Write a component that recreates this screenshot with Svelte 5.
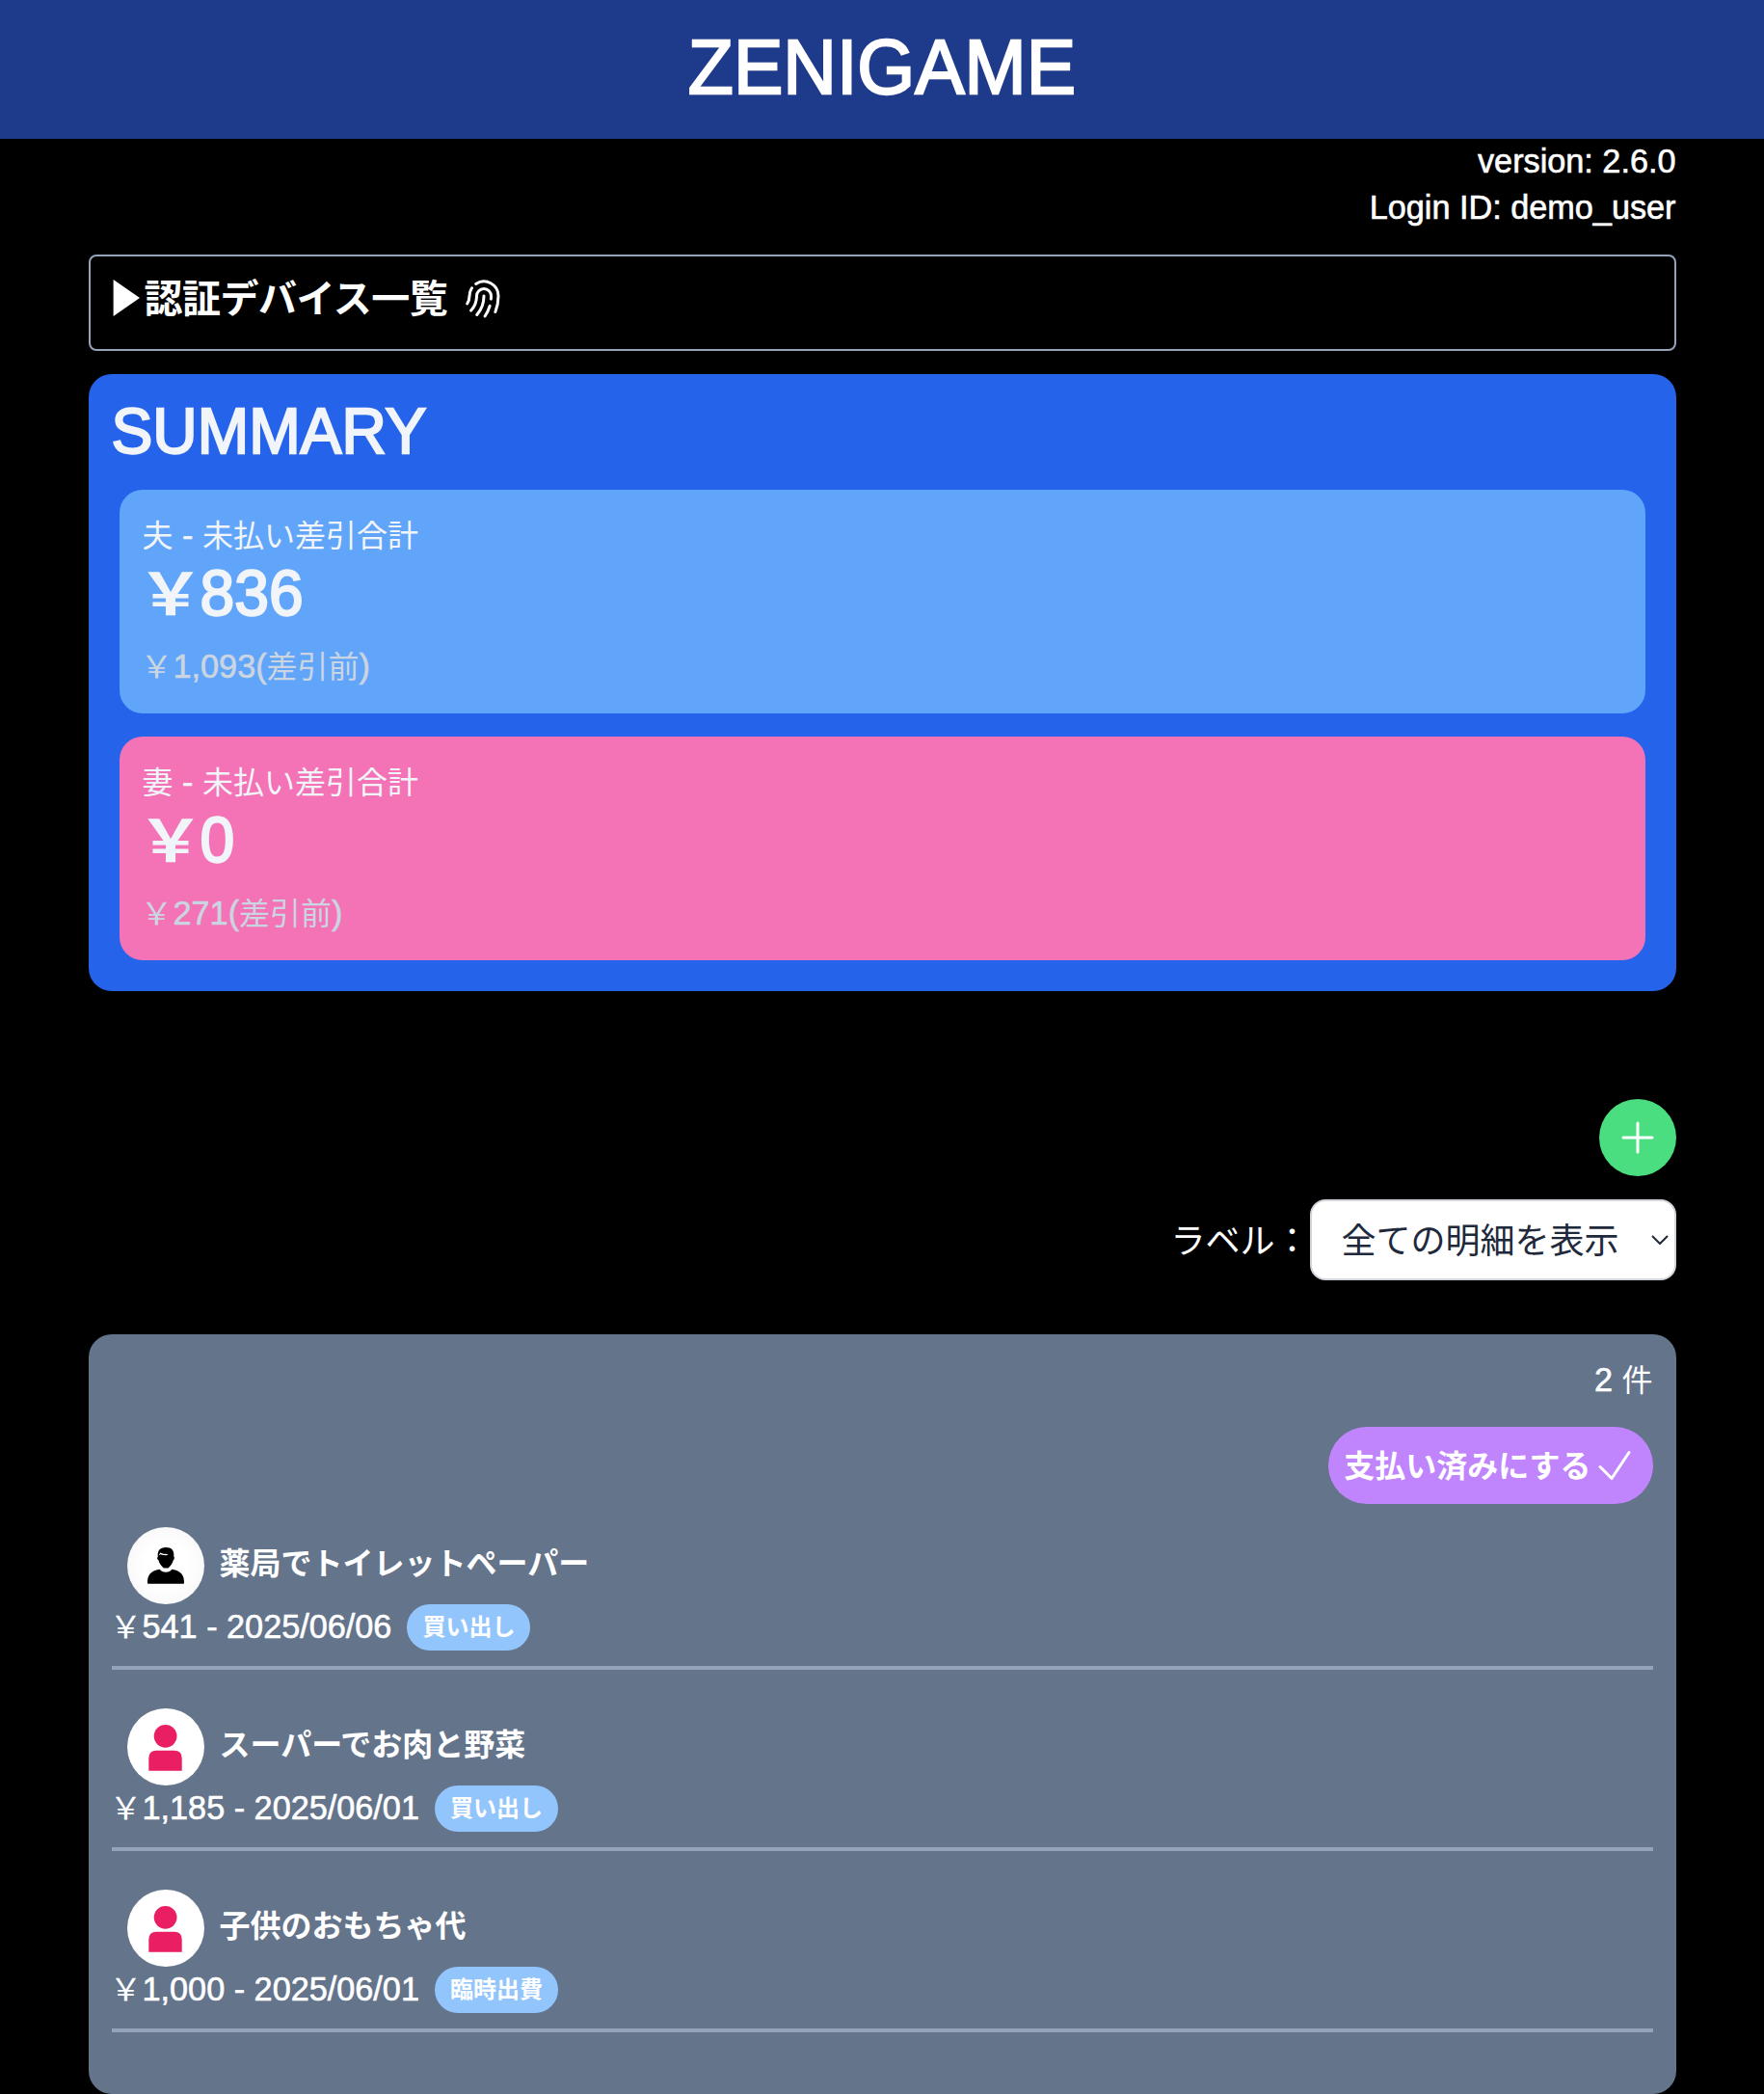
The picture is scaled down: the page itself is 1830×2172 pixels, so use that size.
<script>
  const summaries = [
    { who: '夫', kind: 'husband', amount: '836', before: '1,093' },
    { who: '妻', kind: 'wife', amount: '0', before: '271' },
  ];
  const items = [
    { kind: 'husband', title: '薬局でトイレットペーパー', price: '541', date: '2025/06/06', label: '買い出し' },
    { kind: 'wife', title: 'スーパーでお肉と野菜', price: '1,185', date: '2025/06/01', label: '買い出し' },
    { kind: 'wife', title: '子供のおもちゃ代', price: '1,000', date: '2025/06/01', label: '臨時出費' },
  ];
</script>

<header><h1><span class="la">ZENIGAME</span></h1></header>
<main>
  <div class="meta">
    <div><span class="la">version: 2.6.0</span></div>
    <div><span class="la">Login ID: demo_user</span></div>
  </div>

  <section class="devices">
    <svg class="marker" viewBox="0 0 28 40"><path d="M0.6 1v38L28 20z" fill="currentColor" /></svg>
    <h2>認証デバイス一覧</h2>
    <svg class="icon finger" viewBox="0 0 24 24"><path d="M7.864 4.243A7.5 7.5 0 0 1 19.5 10.5c0 2.92-.556 5.709-1.568 8.268M5.742 6.364A7.465 7.465 0 0 0 4.5 10.5a7.464 7.464 0 0 1-1.15 3.993m1.989 3.559A11.209 11.209 0 0 0 8.25 10.5a3.75 3.75 0 1 1 7.5 0c0 .527-.021 1.049-.064 1.565M12 10.5a14.94 14.94 0 0 1-3.6 9.75m6.633-4.596a18.666 18.666 0 0 1-2.485 5.33" /></svg>
  </section>

  <section class="summary">
    <h2><span class="la">SUMMARY</span></h2>
    {#each summaries as s}
      <div class="card {s.kind}">
        <div class="name">{s.who}<span class="la">&nbsp;-&nbsp;</span>未払い差引合計</div>
        <div class="amount"><span class="yen">￥</span><span class="la">{s.amount}</span></div>
        <div class="before"><span class="yen">￥</span><span class="la">{s.before}(</span>差引前<span class="la">)</span></div>
      </div>
    {/each}
  </section>

  <div class="add-row">
    <button class="add" aria-label="追加"><svg class="icon" viewBox="0 0 24 24"><path d="M12 4.5v15m7.5-7.5h-15" /></svg></button>
  </div>

  <div class="filter">
    <span class="caption">ラベル：</span>
    <div class="select">
      <span class="caption">全ての明細を表示</span>
      <svg viewBox="0 0 18 10"><path d="M1 1l8 8 8-8" /></svg>
    </div>
  </div>

  <section class="list">
    <div class="count"><span class="la">2&nbsp;</span>件</div>
    <button class="paid"><span class="caption">支払い済みにする</span><svg class="icon" viewBox="0 0 24 24"><path d="m4.5 12.75 6 6 9-13.5" /></svg></button>
    {#each items as item}
      <article>
        <div class="head">
          <div class="avatar {item.kind}">
            {#if item.kind === 'husband'}
              <svg viewBox="0 0 80 80">
                <path d="M31.8 31c-.8-6.500 2.200-10 8.200-10s9 3 8.300 9.500c.9.5.7 3-.5 3.800-.5 3-3 6.200-5.300 8.200h-4.600c-2.400-2-5-5.200-5.500-8.200-1.500-.8-1.700-2.800-.6-3.300z" />
                <path d="M21 58c-.3-8 3-12.500 12.500-14.300 3 4 10 4 13 0C56 45.500 59.300 50 59 58q0 .8-.8.8H21.800q-.8 0-.8-.8z" />
                <path class="shine" d="M32.600 29.500l1.600-3 3.200 1.300 5.200.3-1.800 1.200-3.500-.2-3-.8z" />
              </svg>
            {:else}
              <svg viewBox="0 0 80 80">
                <circle cx="39.600" cy="28.800" r="11.900" />
                <path d="M22.300 64.800V51.800q0-8 8-8h18.400q8 0 8 8v13z" />
              </svg>
            {/if}
          </div>
          <h3>{item.title}</h3>
        </div>
        <div class="detail">
          <span class="price"><span class="yen">￥</span><span class="la">{item.price} - {item.date}</span></span>
          <span class="badge">{item.label}</span>
        </div>
      </article>
    {/each}
  </section>
</main>

<style>
  :global(body) {
    background: #000;
    color: #fff;
    font: 32px/48px "Noto Sans CJK JP", sans-serif;
  }
  h1, h2, h3 { margin: 0; }
  /* Latin text is set slightly larger than the Japanese around it. */
  .la {
    display: inline-block;
    font-family: "Liberation Sans", sans-serif;
    font-size: 1.07em;
    font-weight: 400;
    line-height: 1;
    transform: scaleY(1.035);
    transform-origin: 50% 85%;
    -webkit-text-stroke: 0.6px currentColor;
  }
  .yen { display: inline-block; line-height: 1; transform: translateX(-1.5px) scaleX(1.06); }
  .amount .yen { transform: translateX(-1px) scaleX(1.15); }
  h1 .la, .summary h2 .la, .amount .la { -webkit-text-stroke: 2.2px currentColor; }
  .icon {
    width: 48px;
    height: 48px;
    fill: none;
    stroke: currentColor;
    stroke-width: 1.5;
    stroke-linecap: round;
    stroke-linejoin: round;
    flex: none;
  }
  button { border: 0; padding: 0; color: inherit; font: inherit; }
  header {
    height: 144px;
    box-sizing: border-box;
    padding-top: 26px;
    background: #1e3a8a;
    text-align: center;
  }
  h1 { font-size: 72px; line-height: 80px; }
  main { width: 90%; margin: 0 auto; }
  .meta { text-align: right; height: 120px; }
  .meta div { height: 48px; line-height: 42px; }
  .devices {
    display: flex;
    align-items: flex-start;
    height: 100px;
    box-sizing: border-box;
    border: 2px solid #94a3b8;
    border-radius: 8px;
    padding: 22px;
  }
  .marker { width: 28px; height: 40px; margin: 1px 5px 0 1px; }
  .devices h2 { font-size: 40px; line-height: 38px; letter-spacing: -0.5px; }
  .finger { margin: -2px 0 0 14px; }
  .summary {
    margin-top: 24px;
    height: 640px;
    box-sizing: border-box;
    background: #2563eb;
    border-radius: 24px;
    padding: 24px 32px;
    color: #f1f5f9;
  }
  .summary h2 { font-size: 60px; line-height: 64px; height: 72px; margin: 0 0 24px -8px; }
  .card { height: 232px; box-sizing: border-box; border-radius: 24px; padding: 24px; }
  .card + .card { margin-top: 24px; }
  .card.husband { background: #60a5fa; }
  .card.wife { background: #f472b6; }
  .name { height: 48px; line-height: 42px; }
  .amount { font-size: 60px; line-height: 64px; height: 72px; font-weight: 700; }
  .before { color: #cbd5e1; margin-top: 16px; height: 48px; line-height: 42px; }
  .add-row { display: flex; justify-content: flex-end; margin-top: 112px; }
  .add {
    width: 80px;
    height: 80px;
    border-radius: 50%;
    background: #4ade80;
    display: grid;
    place-items: center;
  }
  .filter {
    display: flex;
    justify-content: flex-end;
    align-items: center;
    margin-top: 24px;
    font-size: 36px;
  }
  .caption { padding-bottom: 5px; }
  .select {
    width: 380px;
    height: 84px;
    box-sizing: border-box;
    border: 2px solid #d1d5db;
    border-radius: 16px;
    background: #fff;
    color: #1e293b;
    padding: 0 6px 0 31px;
    display: flex;
    align-items: center;
    justify-content: space-between;
  }
  .select svg { width: 18px; height: 10px; fill: none; stroke: currentColor; stroke-width: 2; }
  .list {
    margin-top: 56px;
    height: 788px;
    box-sizing: border-box;
    border-radius: 24px;
    background: #64748b;
    padding: 24px;
    display: flex;
    flex-direction: column;
  }
  .count { text-align: right; height: 48px; line-height: 42px; }
  .paid {
    align-self: flex-end;
    display: flex;
    align-items: center;
    height: 80px;
    margin-top: 24px;
    padding: 0 16px;
    border-radius: 40px;
    background: #c084fc;
    font-weight: 700;
  }
  article { margin-top: 24px; border-bottom: 4px solid #94a3b8; height: 144px; }
  article + article { margin-top: 40px; }
  .head { display: flex; align-items: center; gap: 16px; padding-left: 16px; height: 80px; }
  .head h3 { font-size: 32px; line-height: 48px; padding-bottom: 10px; }
  .avatar { width: 80px; height: 80px; border-radius: 50%; background: #fff; overflow: hidden; }
  .avatar svg { display: block; width: 80px; height: 80px; }
  .avatar.husband { background: radial-gradient(circle, #fff 40%, #f4f4f4); }
  .avatar.wife { fill: #e91e63; }
  .avatar .shine { fill: #fff; }
  .detail { display: flex; align-items: center; gap: 16px; height: 48px; }
  .price { height: 48px; line-height: 42px; }
  .badge {
    height: 48px;
    line-height: 44px;
    padding: 0 16px;
    border-radius: 24px;
    background: #93c5fd;
    font-size: 24px;
    font-weight: 700;
  }
</style>
